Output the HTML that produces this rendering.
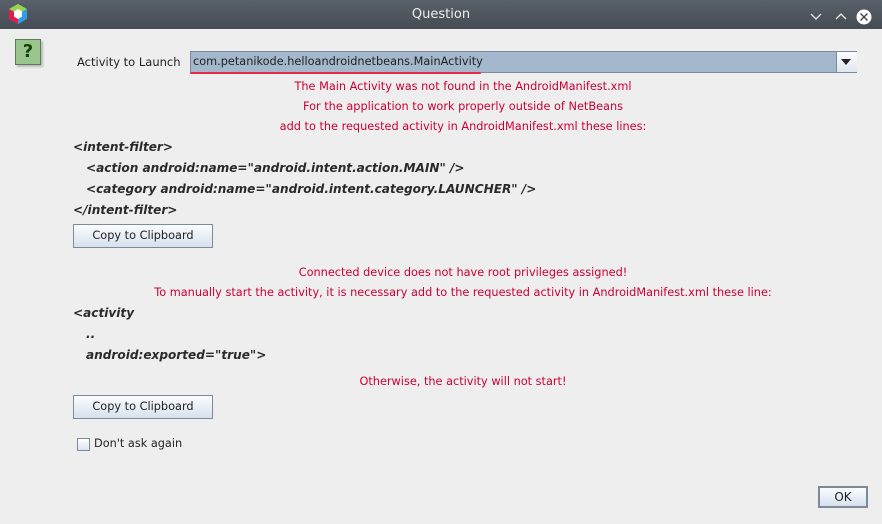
<!DOCTYPE html>
<html><head><style>
body{margin:0;width:882px;height:524px;background:#eeeeee;font-family:"DejaVu Sans","Liberation Sans",sans-serif;font-size:11px;color:#222;position:relative;overflow:hidden}
.a{position:absolute;white-space:nowrap}
.title{position:absolute;left:0;top:0;width:882px;height:29px;background:linear-gradient(#59616a,#454b53)}
.red{color:#cc0033;font-size:11.3px;width:882px;left:0;text-align:center;margin-left:22px}
.code{font-weight:bold;font-style:italic;font-size:12.1px;color:#2a2a2a}
.btn{position:absolute;border:1px solid #7d8a99;background:linear-gradient(#fbfcfe,#d6e1ee);text-align:center;font-size:11.3px;color:#222;box-sizing:border-box}
</style></head><body>
<div class="title"></div>
<svg class="a" style="left:8px;top:3px" width="20" height="22" viewBox="0 0 20 22"><polygon points="10,1 19,6 19,16 10,21 1,16 1,6" fill="#2f9de0"/><polygon points="10,1 19,6 10,11 1,6" fill="#9ad34a"/><polygon points="1,6 10,11 10,21 1,16" fill="#d8204a"/><polygon points="10,6 14,8.5 14,13.5 10,16 6,13.5 6,8.5" fill="#fff"/></svg>
<div class="a" style="left:0;width:882px;top:7px;text-align:center;color:#eee;font-size:13px">Question</div>
<svg class="a" style="left:808px;top:8px" width="70" height="18"><path d="M3 6l5 5 5-5" stroke="#eee" fill="none" stroke-width="1.3"/><path d="M28 11l5-5 5 5" stroke="#eee" fill="none" stroke-width="1.3"/><circle cx="56" cy="7" r="7.5" fill="#fff" transform="translate(0,2)"/><path d="M52.5 5.5l7 7M59.5 5.5l-7 7" stroke="#444" stroke-width="1.4"/></svg>
<div class="a" style="left:15px;top:39px;width:26px;height:26px;background:#99c58c;border:1px solid #5d7b58;box-sizing:border-box;box-shadow:2px 2px 2px #bbb;text-align:center;font-weight:bold;font-size:18px;line-height:24px;color:#114411">?</div>
<div class="a" style="left:77px;top:55px;font-size:11.5px">Activity to Launch</div>
<div class="a" style="left:190px;top:51px;width:667px;height:22px;background:#a3b8cc;border:1px solid #7a8b9b;box-sizing:border-box"></div>
<div class="a" style="left:836px;top:52px;width:20px;height:20px;background:linear-gradient(#fbfcfe,#dfe7f0);border-left:1px solid #7a8b9b"></div>
<svg class="a" style="left:840px;top:58px" width="12" height="8"><path d="M1 1h10l-5 6z" fill="#222"/></svg>
<div class="a" style="left:193px;top:55px;font-size:11.3px;color:#222">com.petanikode.helloandroidnetbeans.MainActivity</div>
<div class="a" style="left:190px;top:72px;width:291px;height:2px;background:#e8284a;border-radius:1px"></div>
<div class="a red" style="top:80px">The Main Activity was not found in the AndroidManifest.xml</div>
<div class="a red" style="top:100px">For the application to work properly outside of NetBeans</div>
<div class="a red" style="top:120px">add to the requested activity in AndroidManifest.xml these lines:</div>
<div class="a code" style="left:73px;top:140px">&lt;intent-filter&gt;</div>
<div class="a code" style="left:86px;top:161px">&lt;action android:name="android.intent.action.MAIN" /&gt;</div>
<div class="a code" style="left:86px;top:182px">&lt;category android:name="android.intent.category.LAUNCHER" /&gt;</div>
<div class="a code" style="left:73px;top:203px">&lt;/intent-filter&gt;</div>
<div class="btn" style="left:73px;top:224px;width:140px;height:24px;line-height:22px">Copy to Clipboard</div>
<div class="a red" style="top:266px">Connected device does not have root privileges assigned!</div>
<div class="a red" style="top:286px">To manually start the activity, it is necessary add to the requested activity in AndroidManifest.xml these line:</div>
<div class="a code" style="left:73px;top:306px">&lt;activity</div>
<div class="a code" style="left:86px;top:327px">..</div>
<div class="a code" style="left:86px;top:348px">android:exported="true"&gt;</div>
<div class="a red" style="top:375px">Otherwise, the activity will not start!</div>
<div class="btn" style="left:73px;top:395px;width:140px;height:24px;line-height:22px">Copy to Clipboard</div>
<div class="a" style="left:77px;top:438px;width:13px;height:13px;border:1px solid #7d8a99;box-sizing:border-box;background:linear-gradient(#fff,#dbe5f0)"></div>
<div class="a" style="left:94px;top:437px;font-size:11.3px">Don't ask again</div>
<div class="btn" style="left:818px;top:486px;width:50px;height:22px;line-height:18px;border:2px solid #7d8a99;font-size:12px">OK</div>
</body></html>
